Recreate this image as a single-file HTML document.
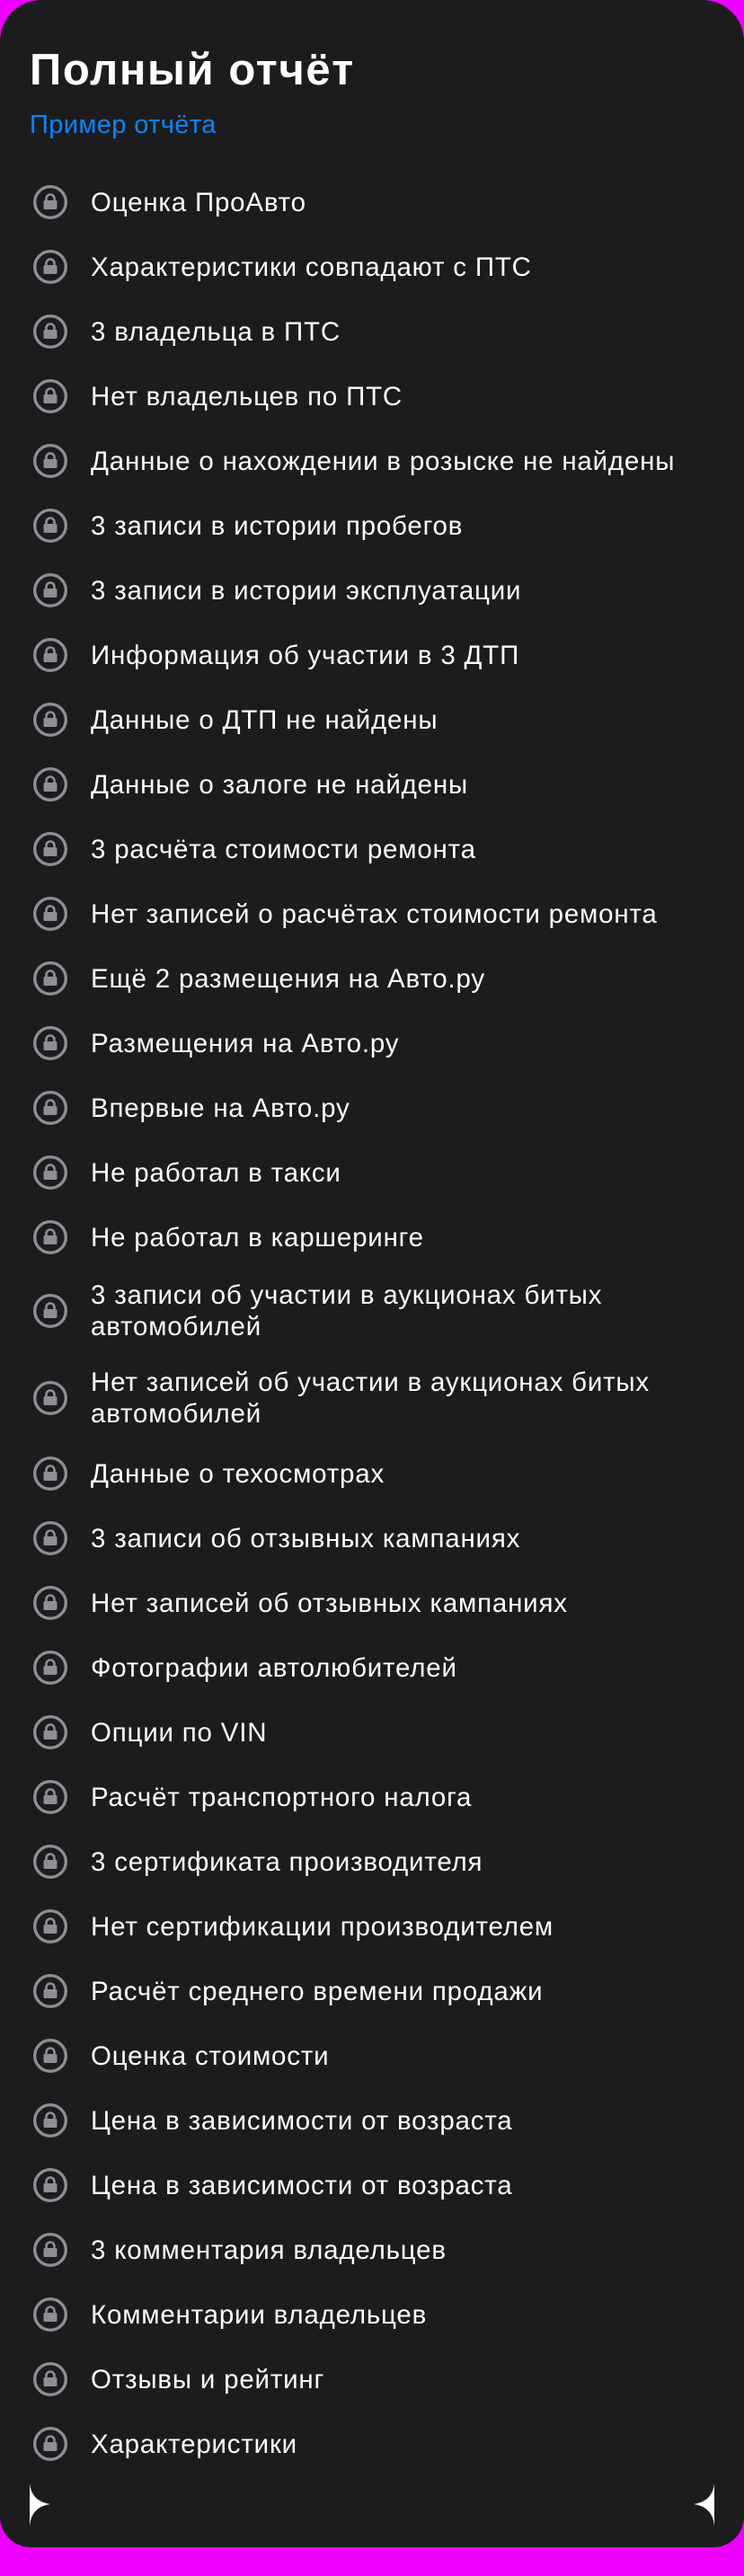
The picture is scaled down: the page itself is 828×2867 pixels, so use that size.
<!DOCTYPE html>
<html><head><meta charset="utf-8"><style>
*{margin:0;padding:0;box-sizing:border-box}
body{width:828px;height:2867px;background:#ee00ff;font-family:"Liberation Sans","Noto Sans CJK SC",sans-serif;position:relative;overflow:hidden}
.card{position:absolute;left:0;top:0;width:828px;height:2835px;background:#1c1c1e;border-radius:46px 46px 34px 34px}
h1{position:absolute;left:33px;top:49px;font-size:49px;font-weight:bold;color:#fff;letter-spacing:1.6px;line-height:58px}
.link{position:absolute;left:33px;top:121px;font-size:29px;color:#0a84ff;line-height:36px;letter-spacing:0.4px}
.it{position:absolute;left:0;width:828px;display:flex;align-items:center}
.it svg{position:absolute;left:36px;top:50%;margin-top:-20px}
.it span{margin-left:101px;font-size:29.5px;color:#fff;line-height:35px;width:715px;letter-spacing:0.8px}
</style></head><body>
<div class="card"></div>
<h1>Полный отчёт</h1>
<div class="link">Пример отчёта</div>
<svg style="position:absolute;left:0;top:0" width="828" height="2867">
<path d="M33 2764 Q35 2784 56 2787 Q35 2790 33 2811 Z" fill="#fff"/>
<path d="M795 2764 Q793 2784 772 2787 Q793 2790 795 2811 Z" fill="#fff"/>
</svg>
<div id="list"></div>
<script>
var items=["Оценка ПроАвто","Характеристики совпадают с ПТС","3 владельца в ПТС","Нет владельцев по ПТС","Данные о нахождении в розыске не найдены","3 записи в истории пробегов","3 записи в истории эксплуатации","Информация об участии в 3 ДТП","Данные о ДТП не найдены","Данные о залоге не найдены","3 расчёта стоимости ремонта","Нет записей о расчётах стоимости ремонта","Ещё 2 размещения на Авто.ру","Размещения на Авто.ру","Впервые на Авто.ру","Не работал в такси","Не работал в каршеринге","3 записи об участии в аукционах битых автомобилей","Нет записей об участии в аукционах битых автомобилей","Данные о техосмотрах","3 записи об отзывных кампаниях","Нет записей об отзывных кампаниях","Фотографии автолюбителей","Опции по VIN","Расчёт транспортного налога","3 сертификата производителя","Нет сертификации производителем","Расчёт среднего времени продажи","Оценка стоимости","Цена в зависимости от возраста","Цена в зависимости от возраста","3 комментария владельцев","Комментарии владельцев","Отзывы и рейтинг","Характеристики"];
var icon='<svg width="40" height="40" viewBox="0 0 40 40"><circle cx="20" cy="20" r="17.3" fill="none" stroke="#8e8e93" stroke-width="3.4"/><path d="M15.5 18.5v-2.5a4.5 4.5 0 0 1 9 0v2.5" fill="none" stroke="#8e8e93" stroke-width="2.6"/><rect x="12.5" y="18" width="15" height="10" rx="1.5" fill="#8e8e93"/></svg>';
var h='';
for(var i=0;i<items.length;i++){
 var c,ht;
 if(i<17){c=225+i*72;ht=40}
 else if(i==17){c=1459;ht=70}
 else if(i==18){c=1556;ht=70}
 else{c=1640+(i-19)*72;ht=40}
 h+='<div class="it" style="top:'+(c-ht/2)+'px;height:'+ht+'px">'+icon+'<span>'+items[i]+'</span></div>';
}
document.getElementById('list').innerHTML=h;
</script>
</body></html>
